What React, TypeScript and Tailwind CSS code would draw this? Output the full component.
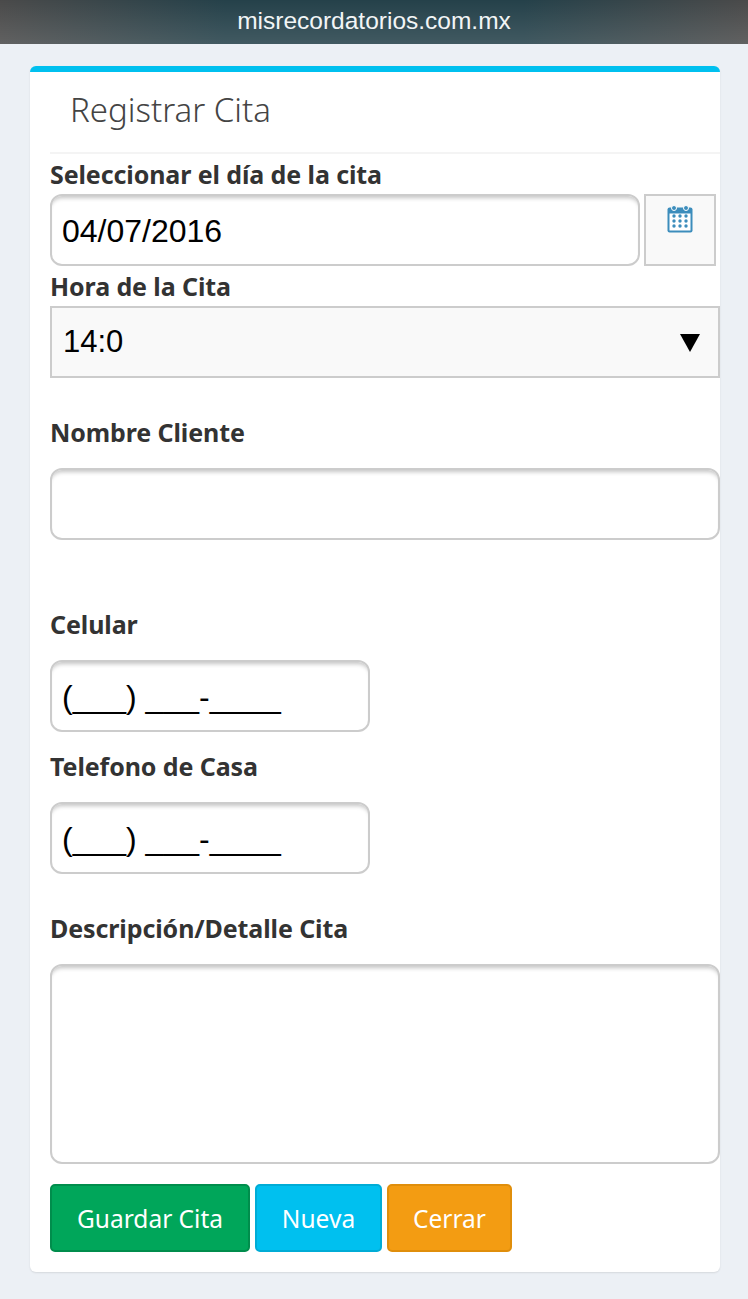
const inputClass =
  "block h-[72px] rounded-[12px] border-2 border-[#cccccc] bg-white px-[10px] pt-[2px] font-['Liberation_Sans',sans-serif] text-[32px] text-black shadow-[inset_0_5px_4px_-3px_#c4c4c4] outline-none";
const labelClass = "block h-[30px] text-[25px] leading-[28px] tracking-[-0.1px] font-bold text-[#333333]";

function CalendarIcon() {
  return (
    <svg width="26" height="28" viewBox="0 0 26 28" aria-hidden="true">
      <rect x="0.5" y="2.5" width="25" height="25" rx="2" fill="#3c8dbc" />
      <rect x="2.5" y="8.5" width="21" height="17" fill="#ffffff" />
      <circle cx="7" cy="3" r="2.5" fill="#3c8dbc" stroke="#ffffff" strokeWidth="1" />
      <circle cx="19" cy="3" r="2.5" fill="#3c8dbc" stroke="#ffffff" strokeWidth="1" />
      {[11, 16, 21].map((y) =>
        [7, 13, 19].map((x) => <circle key={`${x}-${y}`} cx={x} cy={y} r="1.7" fill="#3c8dbc" />),
      )}
    </svg>
  );
}

function MaskedInput() {
  return <input className={`${inputClass} w-[320px]`} defaultValue="(___) ___-____" />;
}

export default function App() {
  return (
    <div className="min-h-[1299px] bg-[#ecf0f5] font-['Noto_Sans',sans-serif]">
      <div className="flex h-[44px] items-center justify-center bg-[linear-gradient(180deg,rgba(255,255,255,0)_0%,rgba(255,255,255,0.13)_100%),linear-gradient(90deg,#4a4a4a_0%,#25414a_30%,#25414a_70%,#4a4a4a_100%)] pb-[2px] font-['Liberation_Sans',sans-serif] text-[24.5px] text-[#f2f5f6]">
        misrecordatorios.com.mx
      </div>

      <div className="pt-[22px] pr-[28px] pl-[30px]">
        <div className="h-[1206px] rounded-[6px] border-t-[6px] border-[#00c0ef] bg-white shadow-[0_1px_2px_rgba(0,0,0,0.1)]">
          <div className="ml-[20px] h-[82px] border-b-2 border-[#f4f4f4] pt-[17px] pl-[20px] text-[33px] leading-[42px] font-light text-[#444444]">
            Registrar Cita
          </div>

          <div className="pl-[20px]">
            <label className={`${labelClass} mt-[6px]`}>Seleccionar el día de la cita</label>
            <div className="mt-[4px] flex gap-[4px]">
              <input className={`${inputClass} w-[590px]`} defaultValue="04/07/2016" />
              <div className="flex h-[72px] w-[72px] justify-center border-2 border-[#cccccc] bg-[#f9f9f9] pt-[9px]">
                <CalendarIcon />
              </div>
            </div>

            <label className={`${labelClass} mt-[6px]`}>Hora de la Cita</label>
            <div className="mt-[4px] flex h-[72px] w-[670px] items-center justify-between border-2 border-[#cccccc] bg-[#f9f9f9] pr-[18px] pl-[11px] font-['Liberation_Sans',sans-serif] text-[31px] text-black">
              <span>14:0</span>
              <svg className="mt-[1px]" width="20" height="18" viewBox="0 0 20 18" aria-hidden="true">
                <path d="M0 0h20L10 18z" fill="#000000" />
              </svg>
            </div>

            <label className={`${labelClass} mt-[40px]`}>Nombre Cliente</label>
            <input className={`${inputClass} mt-[20px] w-[670px]`} />

            <label className={`${labelClass} mt-[70px]`}>Celular</label>
            <div className="mt-[20px]">
              <MaskedInput />
            </div>

            <label className={`${labelClass} mt-[20px]`}>Telefono de Casa</label>
            <div className="mt-[20px]">
              <MaskedInput />
            </div>

            <label className={`${labelClass} mt-[40px]`}>Descripción/Detalle Cita</label>
            <textarea className={`${inputClass} mt-[20px] h-[200px] w-[670px] resize-none`} />

            <div className="mt-[20px] flex gap-[5px] text-[24.5px] text-white">
              <button className="h-[68px] w-[200px] rounded-[5px] border-2 border-[#008d4c] bg-[#00a65a] pt-[2px]">
                Guardar Cita
              </button>
              <button className="h-[68px] w-[127px] rounded-[5px] border-2 border-[#00acd6] bg-[#00c0ef] pt-[2px]">
                Nueva
              </button>
              <button className="h-[68px] w-[125px] rounded-[5px] border-2 border-[#e08e0b] bg-[#f39c12] pt-[2px]">
                Cerrar
              </button>
            </div>
          </div>
        </div>
      </div>
    </div>
  );
}
